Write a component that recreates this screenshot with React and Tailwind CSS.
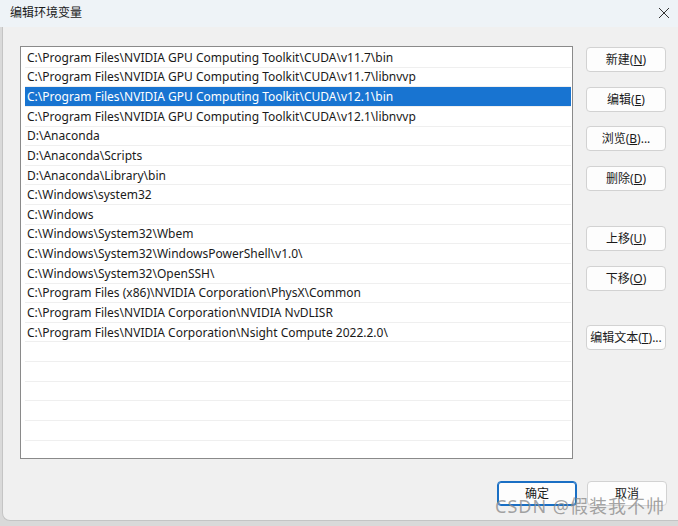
import React from 'react';

const paths = [
  'C:\\Program Files\\NVIDIA GPU Computing Toolkit\\CUDA\\v11.7\\bin',
  'C:\\Program Files\\NVIDIA GPU Computing Toolkit\\CUDA\\v11.7\\libnvvp',
  'C:\\Program Files\\NVIDIA GPU Computing Toolkit\\CUDA\\v12.1\\bin',
  'C:\\Program Files\\NVIDIA GPU Computing Toolkit\\CUDA\\v12.1\\libnvvp',
  'D:\\Anaconda',
  'D:\\Anaconda\\Scripts',
  'D:\\Anaconda\\Library\\bin',
  'C:\\Windows\\system32',
  'C:\\Windows',
  'C:\\Windows\\System32\\Wbem',
  'C:\\Windows\\System32\\WindowsPowerShell\\v1.0\\',
  'C:\\Windows\\System32\\OpenSSH\\',
  'C:\\Program Files (x86)\\NVIDIA Corporation\\PhysX\\Common',
  'C:\\Program Files\\NVIDIA Corporation\\NVIDIA NvDLISR',
  'C:\\Program Files\\NVIDIA Corporation\\Nsight Compute 2022.2.0\\',
];

const rows = [...paths, ...Array(7).fill('')];

function Btn({ label, keyChar, tail = '', primary = false }) {
  return (
    <button
      className={
        'w-[80px] h-[25px] rounded-[4px] bg-[#fdfdfd] text-[12px] text-[#1a1a1a] flex items-center justify-center ' +
        (primary ? 'border border-[#1a6fc4] shadow-[inset_0_0_0_1px_#1a6fc4]' : 'border border-[#d2d2d2]')
      }
    >
      {label}
      {keyChar && (
        <>
          (<span className="underline">{keyChar}</span>)
        </>
      )}
      {tail}
    </button>
  );
}

export default function App() {
  return (
    <div
      className="relative w-[678px] h-[526px] bg-[#d9d9d9] overflow-hidden"
      style={{ fontFamily: '"Noto Sans", "Noto Sans CJK SC", sans-serif' }}
    >
      {/* Title bar */}
      <div className="h-[27px] bg-[#eef3f7] flex items-center justify-between pl-[10px] pr-[7px] pb-[2px]">
        <span className="text-[12px] text-[#1a1a1a]">编辑环境变量</span>
        <svg width="12" height="12" viewBox="0 0 12 12" className="mr-[1px]">
          <path d="M1 1 L11 11 M11 1 L1 11" stroke="#333" strokeWidth="1" fill="none" />
        </svg>
      </div>

      {/* Body */}
      <div className="ml-[2px] h-[494px] bg-[#f0f0f0] border-l border-b border-[#c4c4c4] rounded-bl-[8px] pl-[17px] pt-[19px]">
        <div className="flex gap-[13px]">
          {/* List */}
          <div className="w-[553px] h-[413px] bg-white border border-[#8a8a8a] pt-[1px] pl-[4px] pr-[1px] overflow-hidden">
            {rows.map((r, i) => (
              <div
                key={i}
                className={
                  'h-[19.64px] flex items-center pl-[2px] pt-[1px] text-[12px] whitespace-nowrap border-b border-[#efefef] ' +
                  (i === 2 ? 'bg-[#1874d1] text-white' : 'text-[#1a1a1a]')
                }
              >
                {r}
              </div>
            ))}
          </div>

          {/* Right buttons */}
          <div className="flex flex-col pt-[1px]">
            <Btn label="新建" keyChar="N" />
            <div className="h-[15px]" />
            <Btn label="编辑" keyChar="E" />
            <div className="h-[14px]" />
            <Btn label="浏览" keyChar="B" tail="..." />
            <div className="h-[15px]" />
            <Btn label="删除" keyChar="D" />
            <div className="h-[35px]" />
            <Btn label="上移" keyChar="U" />
            <div className="h-[15px]" />
            <Btn label="下移" keyChar="O" />
            <div className="h-[34px]" />
            <Btn label="编辑文本" keyChar="T" tail="..." />
          </div>
        </div>

        {/* Bottom buttons */}
        <div className="flex justify-end gap-[10px] pr-[11px] mt-[22px]">
          <Btn label="确定" primary />
          <Btn label="取消" />
        </div>
      </div>

      {/* Watermark */}
      <div className="absolute left-[495px] top-[493px] text-[18px] tracking-[1px] text-[#8c8c8c]/80 whitespace-nowrap pointer-events-none">
        CSDN @假装我不帅
      </div>
    </div>
  );
}
